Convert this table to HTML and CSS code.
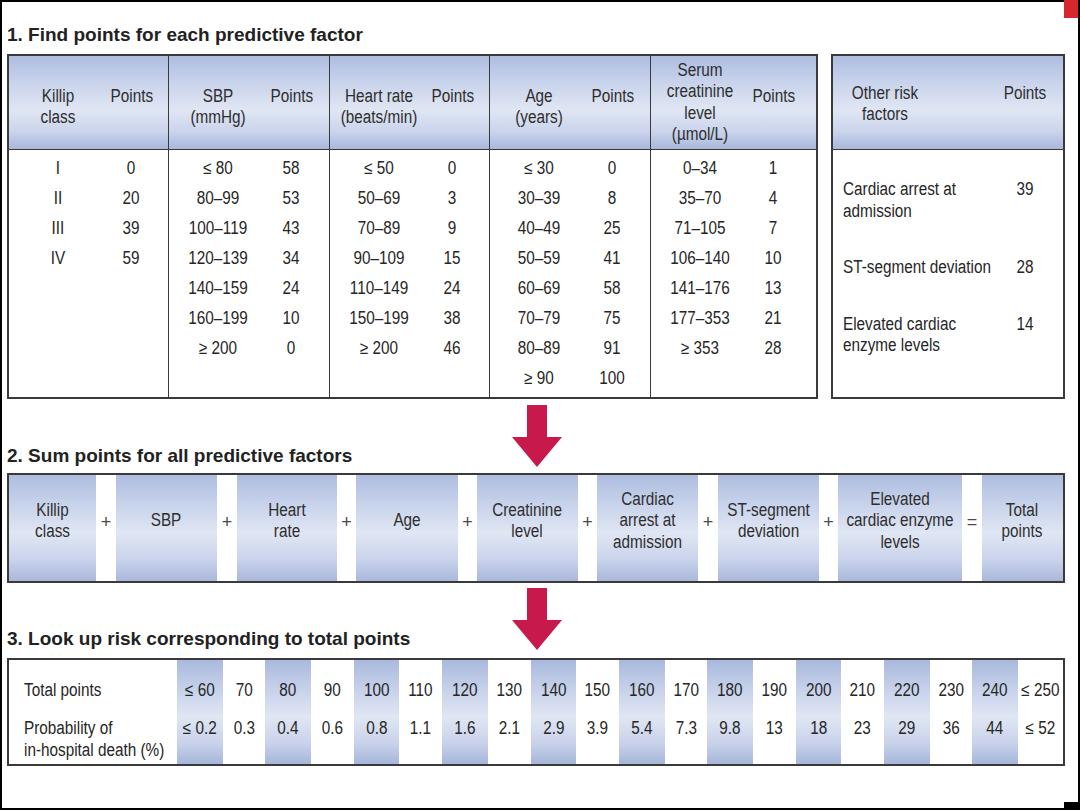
FILE: index.html
```html
<!DOCTYPE html>
<html>
<head>
<meta charset="utf-8">
<title>Risk score</title>
<link rel="stylesheet" href="styles.css">
</head>
<body>
<div class="slide">
  <div class="mark-red"></div>
  <div class="mark-black"></div>

  <div class="step-title t1">1. Find points for each predictive factor</div>
  <div class="step1">
    <div class="factors">
      <div class="group">
        <div class="ghead"><div class="lab">Killip<br>class</div><div class="pts">Points</div></div>
        <div class="gbody"><span>I</span><span>0</span><span>II</span><span>20</span><span>III</span><span>39</span><span>IV</span><span>59</span></div>
      </div>
      <div class="group">
        <div class="ghead"><div class="lab">SBP<br>(mmHg)</div><div class="pts">Points</div></div>
        <div class="gbody"><span>≤ 80</span><span>58</span><span>80–99</span><span>53</span><span>100–119</span><span>43</span><span>120–139</span><span>34</span><span>140–159</span><span>24</span><span>160–199</span><span>10</span><span>≥ 200</span><span>0</span></div>
      </div>
      <div class="group">
        <div class="ghead"><div class="lab">Heart rate<br>(beats/min)</div><div class="pts">Points</div></div>
        <div class="gbody"><span>≤ 50</span><span>0</span><span>50–69</span><span>3</span><span>70–89</span><span>9</span><span>90–109</span><span>15</span><span>110–149</span><span>24</span><span>150–199</span><span>38</span><span>≥ 200</span><span>46</span></div>
      </div>
      <div class="group">
        <div class="ghead"><div class="lab">Age<br>(years)</div><div class="pts">Points</div></div>
        <div class="gbody"><span>≤ 30</span><span>0</span><span>30–39</span><span>8</span><span>40–49</span><span>25</span><span>50–59</span><span>41</span><span>60–69</span><span>58</span><span>70–79</span><span>75</span><span>80–89</span><span>91</span><span>≥ 90</span><span>100</span></div>
      </div>
      <div class="group last">
        <div class="ghead"><div class="lab tall">Serum<br>creatinine<br>level<br>(µmol/L)</div><div class="pts">Points</div></div>
        <div class="gbody"><span>0–34</span><span>1</span><span>35–70</span><span>4</span><span>71–105</span><span>7</span><span>106–140</span><span>10</span><span>141–176</span><span>13</span><span>177–353</span><span>21</span><span>≥ 353</span><span>28</span></div>
      </div>
    </div>
    <div class="other">
      <div class="ohead"><div class="lab">Other risk<br>factors</div><div class="pts">Points</div></div>
      <div class="obody">
        <div class="orow"><span class="olab">Cardiac arrest at<br>admission</span><span class="onum">39</span></div>
        <div class="orow"><span class="olab">ST-segment deviation</span><span class="onum">28</span></div>
        <div class="orow"><span class="olab">Elevated cardiac<br>enzyme levels</span><span class="onum">14</span></div>
      </div>
    </div>
  </div>

  <div class="step-title t2">2. Sum points for all predictive factors
    <svg class="arrow" width="50" height="62" viewBox="0 0 50 62"><polygon points="15,0 35,0 35,32 50,32 25,62 0,32 15,32"/></svg>
  </div>
  <div class="sum">
    <div class="cell"><span>Killip<br>class</span></div><div class="op">+</div>
    <div class="cell"><span>SBP</span></div><div class="op">+</div>
    <div class="cell"><span>Heart<br>rate</span></div><div class="op">+</div>
    <div class="cell"><span>Age</span></div><div class="op">+</div>
    <div class="cell"><span>Creatinine<br>level</span></div><div class="op">+</div>
    <div class="cell"><span>Cardiac<br>arrest at<br>admission</span></div><div class="op">+</div>
    <div class="cell"><span>ST-segment<br>deviation</span></div><div class="op">+</div>
    <div class="cell"><span>Elevated<br>cardiac enzyme<br>levels</span></div><div class="op">=</div>
    <div class="cell"><span>Total<br>points</span></div>
  </div>

  <div class="step-title t3">3. Look up risk corresponding to total points
    <svg class="arrow" width="50" height="62" viewBox="0 0 50 62"><polygon points="15,0 35,0 35,32 50,32 25,62 0,32 15,32"/></svg>
  </div>
  <div class="risk">
    <div class="rlabel"><div class="r1">Total points</div><div class="r2">Probability of<br>in-hospital death (%)</div></div>
    <div class="rcol sh"><div class="r1">≤ 60</div><div class="r2">≤ 0.2</div></div>
    <div class="rcol"><div class="r1">70</div><div class="r2">0.3</div></div>
    <div class="rcol sh"><div class="r1">80</div><div class="r2">0.4</div></div>
    <div class="rcol"><div class="r1">90</div><div class="r2">0.6</div></div>
    <div class="rcol sh"><div class="r1">100</div><div class="r2">0.8</div></div>
    <div class="rcol"><div class="r1">110</div><div class="r2">1.1</div></div>
    <div class="rcol sh"><div class="r1">120</div><div class="r2">1.6</div></div>
    <div class="rcol"><div class="r1">130</div><div class="r2">2.1</div></div>
    <div class="rcol sh"><div class="r1">140</div><div class="r2">2.9</div></div>
    <div class="rcol"><div class="r1">150</div><div class="r2">3.9</div></div>
    <div class="rcol sh"><div class="r1">160</div><div class="r2">5.4</div></div>
    <div class="rcol"><div class="r1">170</div><div class="r2">7.3</div></div>
    <div class="rcol sh"><div class="r1">180</div><div class="r2">9.8</div></div>
    <div class="rcol"><div class="r1">190</div><div class="r2">13</div></div>
    <div class="rcol sh"><div class="r1">200</div><div class="r2">18</div></div>
    <div class="rcol"><div class="r1">210</div><div class="r2">23</div></div>
    <div class="rcol sh"><div class="r1">220</div><div class="r2">29</div></div>
    <div class="rcol"><div class="r1">230</div><div class="r2">36</div></div>
    <div class="rcol sh"><div class="r1">240</div><div class="r2">44</div></div>
    <div class="rcol"><div class="r1">≤ 250</div><div class="r2">≤ 52</div></div>
  </div>
</div>
</body>
</html>
```

FILE: styles.css
```css
html, body {
  margin: 0;
  padding: 0;
  background: #ffffff;
}

.slide {
  position: relative;
  width: 1080px;
  height: 810px;
  box-sizing: border-box;
  border: 2px solid #000;
  padding: 22px 13px 0 5px;
  background: #fff;
  font-family: "Liberation Sans", Arial, sans-serif;
  font-size: 18px;
  color: #262626;
}

.mark-red {
  position: absolute;
  top: -2px;
  right: 0;
  width: 14px;
  height: 18px;
  background: #d6262e;
}

.mark-black {
  position: absolute;
  bottom: -2px;
  right: -2px;
  width: 16px;
  height: 8px;
  background: #000;
}

.step-title {
  position: relative;
  font-family: "Liberation Sans", Arial, sans-serif;
  font-weight: bold;
  font-size: 19px;
  line-height: 22px;
  height: 22px;
  color: #222;
}

.t1 { margin-bottom: 8px; }
.t2 { margin-top: 46px; margin-bottom: 6px; }
.t3 { margin-top: 45px; margin-bottom: 8px; }

.arrow {
  position: absolute;
  left: 505px;
  top: -40px;
  fill: #c8194c;
}

/* narrow (condensed) text rendering */
.gbody span,
.ghead .lab, .ghead .pts,
.ohead .lab, .ohead .pts,
.onum,
.cell span,
.rcol .r1, .rcol .r2 {
  transform: scaleX(0.85);
}
.olab,
.rlabel .r1, .rlabel .r2 {
  transform: scaleX(0.85);
  transform-origin: left center;
}

/* ---------- Step 1 ---------- */
.step1 {
  display: flex;
  gap: 13px;
  height: 345px;
}

.factors {
  display: flex;
  width: 811px;
  box-sizing: border-box;
  border: 2px solid #3a3a3a;
}

.group {
  display: flex;
  flex-direction: column;
  width: 161px;
  box-sizing: border-box;
  border-left: 1px solid #3a3a3a;
}
.group:first-child { width: 159px; border-left: none; }
.group:nth-child(3) { width: 160px; }
.group.last { width: 166px; }

.ghead, .ohead {
  display: grid;
  grid-template-columns: 98px 48px;
  align-items: center;
  height: 94px;
  box-sizing: border-box;
  border-bottom: 1px solid #3a3a3a;
  background: linear-gradient(180deg, #aebde0 0%, #c8d3eb 28%, #e0e6f3 58%, #c9d3eb 82%, #a8b7db 100%);
  text-align: center;
  line-height: 21.5px;
  color: #2e2e2e;
  white-space: nowrap;
}

.lab, .pts {
  padding-top: 9px;
}
.pts { padding-bottom: 21px; }
.lab.tall { padding-top: 0; }

.gbody {
  display: grid;
  grid-template-columns: 98px 48px;
  grid-auto-rows: 30px;
  padding-top: 3px;
  text-align: center;
  line-height: 30px;
  white-space: nowrap;
}

.other {
  width: 234px;
  box-sizing: border-box;
  border: 2px solid #3a3a3a;
  display: flex;
  flex-direction: column;
}

.ohead {
  grid-template-columns: 104px 1fr 60px 8px;
}
.ohead .lab { padding-top: 3px; grid-column: 1; }
.ohead .pts { padding-top: 3px; grid-column: 3; }

.obody {
  display: flex;
  flex-direction: column;
  gap: 35px;
  padding: 29px 8px 0 10px;
}

.orow {
  display: flex;
  align-items: flex-start;
  line-height: 21.5px;
}
.olab { flex: 1; min-width: 0; white-space: nowrap; }
.onum { flex: none; width: 60px; text-align: center; }

/* ---------- Step 2 ---------- */
.sum {
  display: grid;
  grid-template-columns: 87px 20px 101px 20px 100px 19px 102px 19px 101px 19px 101px 20px 101px 19px 124px 20px 81px;
  height: 110px;
  box-sizing: border-box;
  border: 2px solid #3a3a3a;
  width: 1058px;
}

.cell {
  display: flex;
  align-items: center;
  justify-content: center;
  text-align: center;
  padding-bottom: 14px;
  line-height: 21.5px;
  background: linear-gradient(180deg, #aebde0 0%, #c8d3eb 28%, #e0e6f3 55%, #c9d3eb 80%, #a8b7db 100%);
  color: #2e2e2e;
  white-space: nowrap;
}

.op {
  display: flex;
  align-items: center;
  justify-content: center;
  padding-bottom: 12px;
  color: #4a4a4a;
  font-size: 18px;
}

/* ---------- Step 3 ---------- */
.risk {
  display: grid;
  grid-template-columns: 168px repeat(10, 46fr 43fr);
  width: 1058px;
  height: 108px;
  box-sizing: border-box;
  border: 2px solid #3a3a3a;
}

.rlabel, .rcol {
  padding-top: 19px;
  white-space: nowrap;
}
.rlabel { padding-left: 15px; }
.rcol { text-align: center; }
.rcol.sh {
  background: linear-gradient(180deg, #a9b9dd 0%, #c6d1ea 28%, #e0e6f3 55%, #c8d2ea 80%, #a6b6da 100%);
}

.r1 { line-height: 22px; }
.r2 { margin-top: 16px; line-height: 22px; }
```
